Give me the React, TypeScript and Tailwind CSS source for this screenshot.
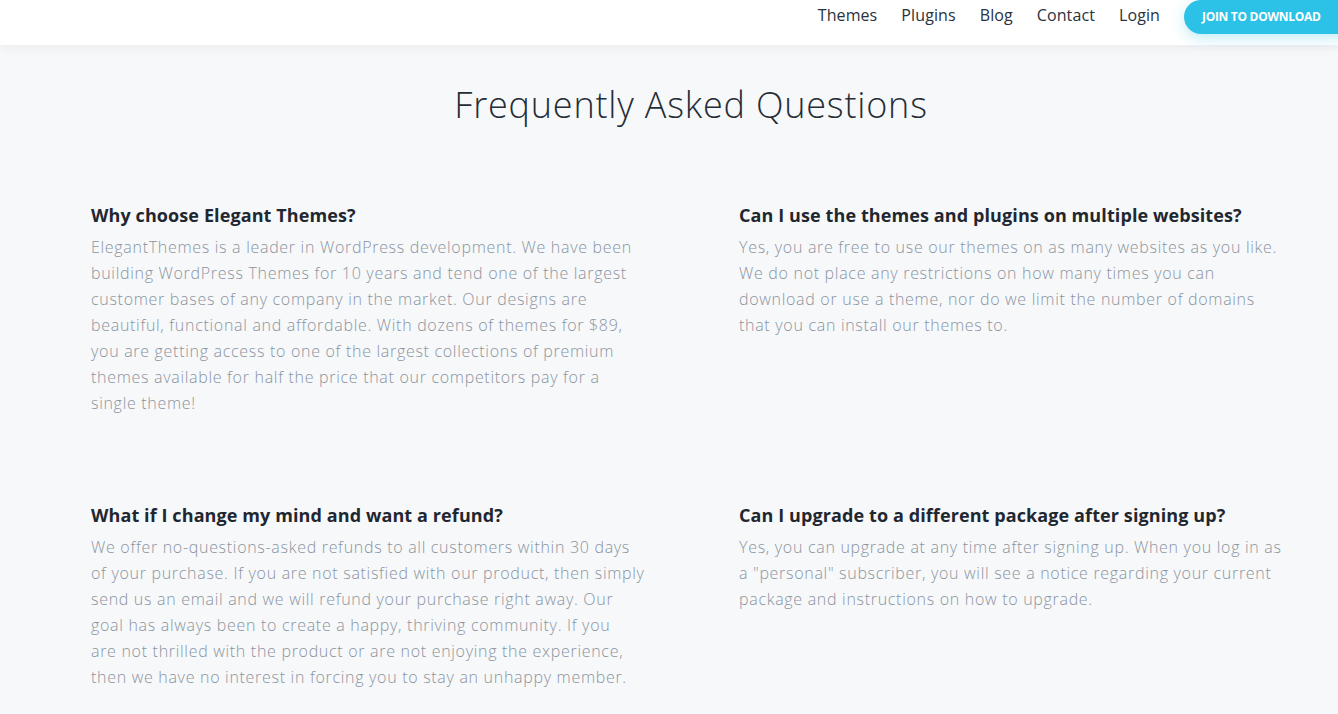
import React from "react";

const faqs = [
  {
    q: "Why choose Elegant Themes?",
    lines: [
      "ElegantThemes is a leader in WordPress development. We have been",
      "building WordPress Themes for 10 years and tend one of the largest",
      "customer bases of any company in the market. Our designs are",
      "beautiful, functional and affordable. With dozens of themes for $89,",
      "you are getting access to one of the largest collections of premium",
      "themes available for half the price that our competitors pay for a",
      "single theme!",
    ],
  },
  {
    q: "Can I use the themes and plugins on multiple websites?",
    lines: [
      "Yes, you are free to use our themes on as many websites as you like.",
      "We do not place any restrictions on how many times you can",
      "download or use a theme, nor do we limit the number of domains",
      "that you can install our themes to.",
    ],
  },
  {
    q: "What if I change my mind and want a refund?",
    lines: [
      "We offer no-questions-asked refunds to all customers within 30 days",
      "of your purchase. If you are not satisfied with our product, then simply",
      "send us an email and we will refund your purchase right away. Our",
      "goal has always been to create a happy, thriving community. If you",
      "are not thrilled with the product or are not enjoying the experience,",
      "then we have no interest in forcing you to stay an unhappy member.",
    ],
  },
  {
    q: "Can I upgrade to a different package after signing up?",
    lines: [
      "Yes, you can upgrade at any time after signing up. When you log in as",
      "a \"personal\" subscriber, you will see a notice regarding your current",
      "package and instructions on how to upgrade.",
    ],
  },
];

const nav = ["Themes", "Plugins", "Blog", "Contact", "Login"];

export default function App() {
  return (
    <div className="min-h-[714px] bg-[#f7f8fa] overflow-hidden font-['Open_Sans',sans-serif] relative">
      {/* header */}
      <header className="relative z-10 h-[45px] bg-white shadow-[0_2px_12px_rgba(0,0,0,0.06)] flex justify-end items-start">
        <nav className="flex items-center gap-[24px] h-[30px] mr-[24px]">
          {nav.map((n) => (
            <a key={n} className="text-[16px] text-[#2a323c] tracking-[0.1px]">
              {n}
            </a>
          ))}
        </nav>
        <button className="h-[34px] w-[176px] -mr-[22px] rounded-full bg-[#2cc1e6] text-white text-[12px] font-bold tracking-[-0.3px] pl-[18px] text-left shadow-[0_4px_14px_rgba(44,193,230,0.3)]">
          JOIN TO DOWNLOAD
        </button>
      </header>

      <h1 className="mt-[37px] pl-[44px] text-center text-[36px] leading-[46px] font-light text-[#252d36] tracking-[0.8px]">
        Frequently Asked Questions
      </h1>

      <div className="mt-[74px] pl-[91px] grid grid-cols-[550px_550px] gap-x-[98px] gap-y-[86px]">
        {faqs.map((f) => (
          <div key={f.q}>
            <h3 className="text-[18px] leading-[26px] font-bold text-[#1f2730] tracking-[0.1px] whitespace-nowrap">
              {f.q}
            </h3>
            <div className="mt-[6px] text-[16px] leading-[26px] font-light text-[#8a949f] tracking-[0.7px]">
              {f.lines.map((l, i) => (
                <div key={i} className="whitespace-nowrap">
                  {l}
                </div>
              ))}
            </div>
          </div>
        ))}
      </div>
    </div>
  );
}
